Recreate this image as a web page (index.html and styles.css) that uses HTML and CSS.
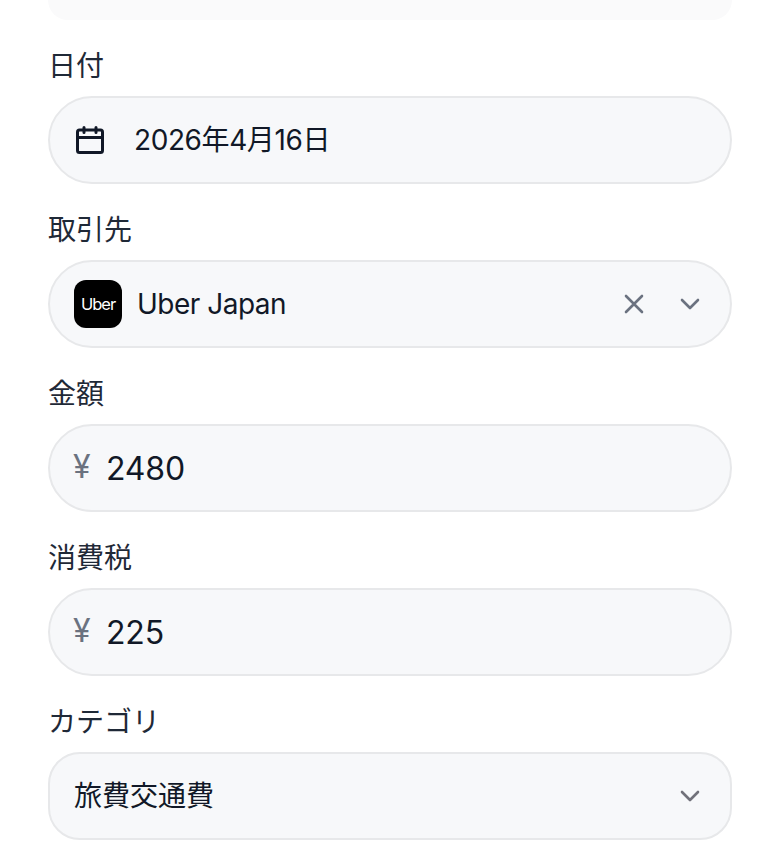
FILE: index.html
```html
<!DOCTYPE html>
<html lang="ja">
<head>
<meta charset="utf-8">
<title>経費フォーム</title>
<link rel="stylesheet" href="styles.css">
</head>
<body>
<form class="form">
  <div class="stub"></div>
  <div class="field">
    <div class="label">日付</div>
    <div class="box pill">
      <svg class="cal" viewBox="0 0 28 28" fill="none" stroke="currentColor" stroke-width="3" stroke-linecap="round" stroke-linejoin="round"><rect x="1.5" y="4" width="25" height="22.5" rx="2"/><path d="M8 1.5v5M20 1.5v5M1.5 11.5h25"/></svg>
      <span class="value date">2026年4月16日</span>
    </div>
  </div>
  <div class="field">
    <div class="label">取引先</div>
    <div class="box pill vendor">
      <span class="logo">Uber</span>
      <span class="value name">Uber Japan</span>
      <svg class="x" viewBox="0 0 20 20" fill="none" stroke="currentColor" stroke-width="2.6" stroke-linecap="round"><path d="M2 2l16 16M18 2L2 18"/></svg>
      <svg class="chev" viewBox="0 0 20 12" fill="none" stroke="currentColor" stroke-width="2.6" stroke-linecap="round" stroke-linejoin="round"><path d="M2 2l8 8 8-8"/></svg>
    </div>
  </div>
  <div class="field">
    <div class="label">金額</div>
    <div class="box pill">
      <span class="yen">¥</span>
      <span class="value amount">2480</span>
    </div>
  </div>
  <div class="field">
    <div class="label">消費税</div>
    <div class="box pill">
      <span class="yen">¥</span>
      <span class="value amount">225</span>
    </div>
  </div>
  <div class="field">
    <div class="label">カテゴリ</div>
    <div class="box select">
      <span class="value">旅費交通費</span>
      <svg class="chev gray" viewBox="0 0 20 12" fill="none" stroke="currentColor" stroke-width="2.6" stroke-linecap="round" stroke-linejoin="round"><path d="M2 2l8 8 8-8"/></svg>
    </div>
  </div>
</form>
</body>
</html>
```
FILE: styles.css
```css
* { box-sizing: border-box; }
html, body { margin: 0; height: 100%; overflow: hidden; background: #fff; }
body {
  font-family: "Inter", "Noto Sans CJK JP", sans-serif;
  color: #111827;
}
.form { display: flex; flex-direction: column; padding: 0 48px; }
.stub {
  height: 20px;
  background: #fafafb;
  border-radius: 0 0 36px 36px;
}
.field { display: flex; flex-direction: column; }
.label {
  height: 76px;
  padding-top: 26px;
  font-size: 28px;
  line-height: 40px;
  color: #1f2937;
}
.box {
  height: 88px;
  display: flex;
  align-items: center;
  background: #f7f8fa;
  border: 2px solid #e7e8ea;
}
.pill { border-radius: 44px; padding: 0 30px 0 24px; }
.select { border-radius: 32px; padding: 0 30px 0 24px; justify-content: space-between; }
.value { font-size: 28px; line-height: 40px; color: #111827; }
.cal { width: 28px; height: 28px; color: #111827; margin-left: 2px; }
.date { margin-left: 30px; letter-spacing: -0.4px; }
.logo {
  width: 48px; height: 48px;
  border-radius: 12px;
  background: #000;
  color: #fff;
  font-size: 16.5px;
  letter-spacing: -1px;
  display: flex; align-items: center; justify-content: center;
}
.name { margin-left: 15px; flex: 1; letter-spacing: -0.5px; }
.x { width: 20px; height: 20px; color: #6b7280; margin-right: 36px; }
.chev { width: 20px; height: 12px; color: #6b7280; }
.gray { color: #71717a; }
.yen { font-size: 32px; line-height: 40px; color: #6b7280; width: 33px; margin: -2px 0 0 -1px; }
.amount { font-size: 32px; letter-spacing: -0.2px; padding-top: 2px; }
```
